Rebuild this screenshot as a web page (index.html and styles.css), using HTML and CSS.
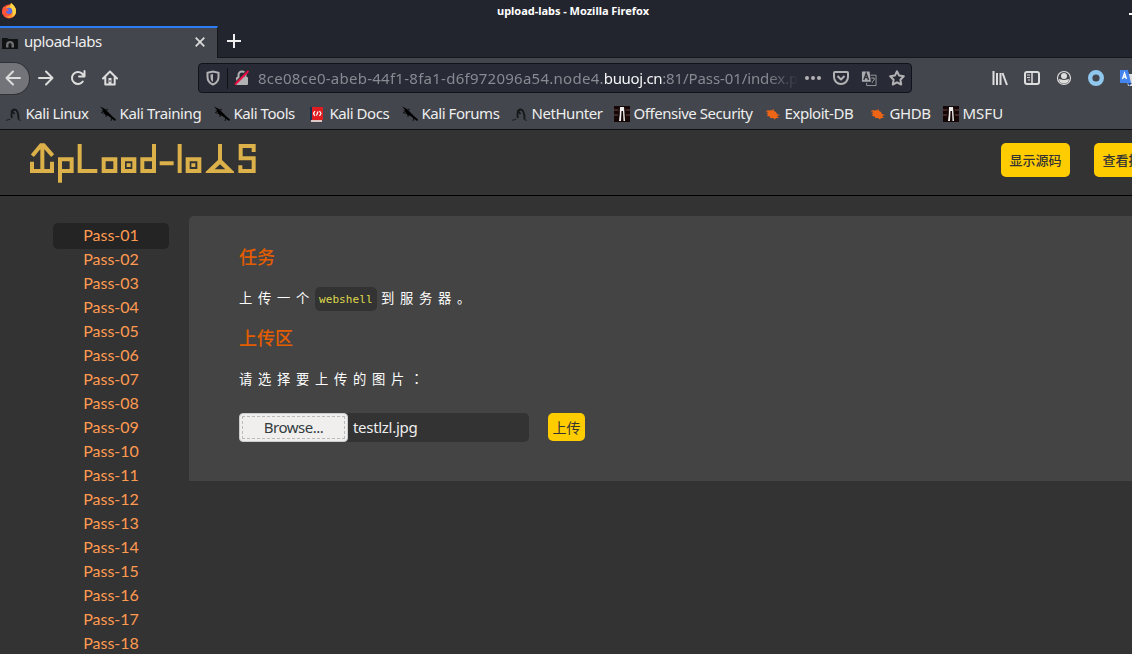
FILE: index.html
```html
<!DOCTYPE html>
<html lang="zh-CN">
<head>
<meta charset="utf-8">
<title>upload-labs</title>
<link rel="stylesheet" href="styles.css">
</head>
<body>
<svg class="defs" width="0" height="0">
  <defs>
    <symbol id="lizard" viewBox="0 0 16 16"><path d="M0 .5 5 3 7.500 5.500 10 8 13 11 16 13.500 15 15 11 12 8.500 10 5.500 9 4 6.500 1 4.500 3.500 4.500z" fill="#000"/><path d="M1 6.500l4 1M6 8v3M12 11l-1 4M6 3l2 1" stroke="#000" stroke-width=".8"/></symbol>
    <symbol id="dragon" viewBox="0 0 16 16"><path d="M6 12C4.500 8 6 3.500 8.500 3.500 11.500 3.500 12.500 7 12.500 13.500M8.500 8 6 5l3-2" fill="none" stroke="#151719" stroke-width="1.800"/><path d="M0 14.500 4.500 13M12 13.500l3 1" stroke="#24272c" stroke-width="1.200"/></symbol>
    <symbol id="offsec" viewBox="0 0 16 16"><path d="M0 0h16v16H0z" fill="#160707"/><path d="M0 4h4.500M11.500 4H16M0 9h4M12 9h4" stroke="#4e3030" stroke-width="1.500"/><path d="M6 1h4l.5 7 .5 7H9.500L9 5H7.500L7 15H5l.8-7z" fill="#eee"/></symbol>
    <symbol id="bug" viewBox="0 0 16 16"><path d="M2 4 5 4.500 7 4 11 6 12 8 15 9 12 10 14 12 11 12 10 13.500 8 12 5 12 5 10.500 2 10 3 8 1 7 3.500 6.500z" fill="#ee6516"/><path d="m1 5 5 2M8 3l1 3" stroke="#ee6516" stroke-width=".8"/></symbol>
  </defs>
</svg>
<div class="titlebar">
  <svg class="fox" viewBox="0 0 16 16"><circle cx="8" cy="8.500" r="7" fill="#f5443a"/><path d="M2 4 4.500 5C6 2 9 3 10 0c3 2 5 5 5 8a6.500 6.500 0 0 1-11 5z" fill="#ff982f"/><path d="M10 0c3 2 5 5 5 8 0 3-2 5-4 6 2-4 1-7-2-9z" fill="#ffd544"/><circle cx="8" cy="8" r="3.200" fill="#5869e8"/><path d="M2 4c3 0 4 2 6 3-1 1-2 1-3 1 0 3 3 4 6 2-2 5-8 4-10 0z" fill="#ff5639"/></svg>
  <span class="window-title">upload-labs - Mozilla Firefox</span>
  <i class="minimize"></i>
</div>
<div class="tabs">
  <div class="tab">
    <svg class="tab-icon" viewBox="0 0 16 16"><path d="M0 3h5l2 1h9v10H0z" fill="#101214"/><path d="M4 12.500V10a4 4 0 0 1 8 0v2.500H9.500V10h-3v2.500z" fill="#6d7073"/><path d="m8 7.500 2 2.500H6z" fill="#17191b"/></svg>
    <span class="tab-text">upload-labs</span>
    <svg class="close" viewBox="0 0 10 10"><path d="m.7.700 8.600 8.600m0-8.600L.7 9.300" stroke="#ddd" stroke-width="1.700"/></svg>
  </div>
  <div class="new-tab"><svg width="14" height="14" viewBox="0 0 14 14"><path d="M7 0v14M0 7h14" stroke="#eee" stroke-width="2"/></svg></div>
</div>
<div class="toolbar">
  <div class="nav">
    <span class="back"><svg width="16" height="16" viewBox="0 0 16 16"><path d="M15 8H1.500M8 1.500 1.500 8 8 14.500" class="line"/></svg></span>
    <svg width="16" height="16" viewBox="0 0 16 16"><path d="M1 8h13.500M8 1.500 14.500 8 8 14.500" class="line"/></svg>
    <svg width="16" height="16" viewBox="0 0 16 16"><path d="M12.800 11.500A6 6 0 1 1 12 3.500l2 2M14.500 1v5.500H9" class="line"/></svg>
    <svg width="16" height="16" viewBox="0 0 16 16"><path d="M1 8.500 8 1.500l7 7M3.300 7.500v7h9.400v-7" class="line"/><path d="M6.500 8h3v6h-3z" fill="#ddd"/><path d="M8 10v2" stroke="#444"/></svg>
  </div>
  <div class="urlbar">
    <svg class="shield" viewBox="0 0 14 16"><path d="M1.500 2.800 7 1.500l5.500 1.300V7c0 4-2 6-5.500 7.500C3.500 13 1.500 11 1.500 7z" fill="none" stroke="#b2b2b5" stroke-width="2"/><path d="M7 4v8C5 11 4.500 9 4.500 7V4.500z" fill="#b2b2b5"/></svg>
    <i class="separator"></i>
    <svg class="lock" viewBox="0 0 16 16"><path d="M4.500 8V5a3.500 3.500 0 0 1 7 0v3" fill="none" stroke="#b2b2b5" stroke-width="2"/><rect x="2" y="7" width="12" height="8" rx="1" fill="#b2b2b5"/><path d="M1.500 13 13 1" stroke="#282a35" stroke-width="2"/><path d="M1 14.500 14.500 1" stroke="#ef0e43" stroke-width="2"/></svg>
    <span class="url">8ce08ce0-abeb-44f1-8fa1-d6f972096a54.node4.<b>buuoj.cn</b><span class="path">:81/Pass-01/index.p</span></span>
    <div class="url-icons">
      <svg width="16" height="16" viewBox="0 0 16 16"><g fill="#b2b2b5"><circle cx="2" cy="8" r="2"/><circle cx="8" cy="8" r="2"/><circle cx="14" cy="8" r="2"/></g></svg>
      <svg width="16" height="16" viewBox="0 0 16 16"><path d="M2 2h12q1 0 1 1v4a7 7 0 0 1-14 0V3q0-1 1-1z" class="dim"/><path d="m4.500 6 3.500 3.500L11.500 6" class="dim"/></svg>
      <svg width="16" height="17" viewBox="0 0 17 17"><path d="M1 1h8l1.500 11H1z" fill="#aaacb0"/><path d="M10 5h6v11H6v-3" fill="none" stroke="#9b9ca2"/><path d="m3 10 2.500-7L8 10M4 7.500h3" fill="none" stroke="#31333b" stroke-width="1.500"/><path d="M11 8h3v2l-2 2v1" fill="none" stroke="#aaa"/></svg>
      <svg width="16" height="16" viewBox="0 0 16 16"><path d="m8 1.300 2.100 4.300 4.700.7-3.400 3.400.8 4.800L8 12.300l-4.200 2.200.8-4.800L1.200 6.300l4.700-.7z" class="dim"/></svg>
    </div>
  </div>
  <div class="tools">
    <svg width="16" height="16" viewBox="0 0 16 16"><path d="M1.500 1v14M5 3v12M8.500 3v12M10.500 3l4.500 12" stroke="#ddd" stroke-width="2"/></svg>
    <svg width="16" height="16" viewBox="0 0 16 16"><rect x="1" y="2" width="14" height="12" rx="2" class="line"/><path d="M8 2v12" stroke="#ddd" stroke-width="1.500"/><path d="M3 5h3M3 7.500h3M4 10h2" stroke="#ddd"/></svg>
    <svg width="16" height="16" viewBox="0 0 16 16"><circle cx="8" cy="8" r="6.500" fill="none" stroke="#ddd" stroke-width="1.200"/><circle cx="8" cy="6" r="3" fill="#ddd"/><path d="M3 9c2 0 2.500 1 5 1s3-1 5-1c0 6-10 6-10 0z" fill="#ddd"/></svg>
    <svg width="16" height="16" viewBox="0 0 16 16"><circle cx="8" cy="8" r="5.800" fill="none" stroke="#8fc7ee" stroke-width="4.400"/></svg>
    <svg width="16" height="16" viewBox="0 0 16 16"><path d="M6 4h10v12H8z" fill="#ddd"/><path d="M0 0h8l3 13H0z" fill="#4384ed"/><path d="m2.500 9 2-6 2 6M3 7h3" fill="none" stroke="#fff" stroke-width="1.300"/><path d="M8 13h4l-3 3z" fill="#174a9a"/></svg>
  </div>
</div>
<div class="bookmarks">
  <span><svg><use href="#dragon"/></svg>Kali Linux</span>
  <span><svg><use href="#lizard"/></svg>Kali Training</span>
  <span><svg><use href="#lizard"/></svg>Kali Tools</span>
  <span><svg viewBox="0 0 16 16"><path d="M1 1h12v13H1z" fill="#df1d20"/><path d="M0 1h2v13H0z" fill="#153452"/><path d="M1 14h11v2H1z" fill="#e0c6c5"/><path d="M5 5 3.500 7.500 5 10m4.500-5L11 7.500 9.500 10M8 5.500l-1.500 4" fill="none" stroke="#fff" stroke-width="1.200"/></svg>Kali Docs</span>
  <span><svg><use href="#lizard"/></svg>Kali Forums</span>
  <span><svg><use href="#dragon"/></svg>NetHunter</span>
  <span><svg><use href="#offsec"/></svg>Offensive Security</span>
  <span><svg><use href="#bug"/></svg>Exploit-DB</span>
  <span><svg><use href="#bug"/></svg>GHDB</span>
  <span><svg><use href="#offsec"/></svg>MSFU</span>
</div>
<header class="site-header">
  <svg class="logo" viewBox="30 36 681 126" role="img" aria-label="upload-labs">
    <g fill="none" stroke="#dcb149" stroke-width="12">
      <path d="M36 95v28h60V95M67 124V46M37 77 63 46h8l27 31"/>
      <path d="M120 158V88h35v35h-30M179 42v81h53M251 88h35v35h-35zM309 88h34v35h-34zM402 42v81h-35V88h35M419 100h42M479 42v87M503 88h35v35h-35z"/>
      <path d="M600 42v54M701 66V48h-39v37h39v38h-40v-17"/>
    </g>
    <path d="M320 100h12v11h-12zM514 100h12v11h-12z" fill="#dcb149"/>
    <path d="M594 90h12l36 35v4h-85v-4zM600 103l-16 15h32z" fill="#dcb149" fill-rule="evenodd"/>
  </svg>
  <div class="header-actions"><a>显示源码</a><a>查看提示</a></div>
</header>
<main class="page">
  <nav class="menu">
    <a class="active">Pass-01</a><a>Pass-02</a><a>Pass-03</a><a>Pass-04</a><a>Pass-05</a><a>Pass-06</a><a>Pass-07</a><a>Pass-08</a><a>Pass-09</a><a>Pass-10</a><a>Pass-11</a><a>Pass-12</a><a>Pass-13</a><a>Pass-14</a><a>Pass-15</a><a>Pass-16</a><a>Pass-17</a><a>Pass-18</a>
  </nav>
  <section class="panel">
    <h3>任务</h3>
    <p>上传一个<code>webshell</code>到服务器。</p>
    <h3>上传区</h3>
    <p>请选择要上传的图片<span class="colon">：</span></p>
    <div class="upload">
      <div class="file"><span class="browse"><span>Browse...</span></span><span class="filename">testlzl.jpg</span></div>
      <span class="submit">上传</span>
    </div>
  </section>
</main>
</body>
</html>
```
FILE: styles.css
```css
* { box-sizing: border-box; }
html, body { height: 100%; margin: 0; overflow: hidden; }
body { width: 1132px; height: 654px; display: flex; flex-direction: column; background: #333; color: #eee; font-family: "Noto Sans", "Noto Sans CJK SC", sans-serif; font-size: 15px; }
body > * { flex-shrink: 0; }
svg { flex: none; display: block; }
.defs { position: absolute; }
.line { fill: none; stroke: #ddd; stroke-width: 2; stroke-linecap: round; stroke-linejoin: round; }
.dim { fill: none; stroke: #b2b2b5; stroke-width: 2; stroke-linejoin: round; }

.titlebar { height: 26px; background: #23252e; display: grid; grid-template-columns: 497px 1fr 3px; align-items: center; overflow: hidden; }
.fox { width: 16px; height: 16px; margin: 0 0 4px 1px; }
.window-title { font-size: 11px; font-weight: 700; color: #fff; line-height: 16px; margin-bottom: 4px; white-space: nowrap; letter-spacing: -.02px; }
.minimize { height: 2px; background: #fff; margin-top: 2px; }

.tabs { height: 32px; display: flex; background: #23252e; border-bottom: 1px solid #16181e; }
.tab { width: 218px; height: 32px; border-top: 2px solid #2b7cf5; border-right: 1px solid #14161b; background: #43464c; display: flex; align-items: center; padding: 0 12px 2px 2px; }
.tab-icon { width: 16px; height: 16px; margin-top: 2px; }
.tab-text { margin-left: 6px; flex: 1; font-size: 15px; line-height: 20px; padding-bottom: 2px; letter-spacing: -.45px; }
.close { width: 10px; height: 10px; }
.new-tab { display: flex; align-items: center; margin-left: 9px; padding-bottom: 1px; }

.toolbar { height: 41px; background: #43464c; display: flex; align-items: center; padding-bottom: 1px; }
.nav { width: 198px; flex: none; display: flex; align-items: center; gap: 16px; }
.back { width: 30px; height: 33px; margin-right: -8px; border: 1px solid #303238; border-left: 0; border-radius: 0 16px 16px 0; background: #737479; display: flex; align-items: center; padding-left: 5px; }
.urlbar { width: 714px; height: 30px; flex: none; border: 1px solid #11131a; border-radius: 4px; background: #282a35; display: flex; align-items: center; padding-left: 7px; }
.shield { width: 14px; height: 16px; }
.separator { width: 1px; height: 21px; margin: 0 6px 0 7px; background: #101218; }
.lock { width: 16px; height: 16px; }
.url { width: 541px; flex: none; margin-left: 8px; padding-bottom: 1px; overflow: hidden; white-space: nowrap; color: #888a91; font-size: 15px; letter-spacing: .26px; -webkit-mask-image: linear-gradient(90deg, #000 94%, transparent); mask-image: linear-gradient(90deg, #000 94%, transparent); }
.url b { font-weight: 400; color: #f5f5f6; letter-spacing: -.35px; }
.path { letter-spacing: -.1px; }
.url-icons { display: flex; align-items: center; gap: 12px; margin-left: 6px; }
.tools { flex: none; display: flex; gap: 16px; margin-left: 80px; }

.bookmarks { height: 31px; background: #43464c; border-bottom: 1px solid #0d0e10; display: grid; grid-template-columns: 94px 114px 96px 92px 110px 102px 151px 105px 73px auto; padding: 0 0 2px 6px; align-items: center; }
.bookmarks span { display: flex; align-items: center; gap: 3.500px; white-space: nowrap; font-size: 15px; line-height: 20px; letter-spacing: -.45px; }
.bookmarks span:nth-child(2) { letter-spacing: -.38px; }
.bookmarks span:nth-child(10) { letter-spacing: 0; }
.bookmarks svg { width: 16px; height: 16px; margin-top: 2px; }

.site-header { height: 66px; border-bottom: 1px solid #000; display: flex; justify-content: space-between; padding: 12px 0 0 30px; }
.logo { width: 227px; height: 42px; }
.header-actions { display: flex; gap: 24px; margin: 1px -31px 0 0; }
.header-actions a { width: 69px; height: 34px; border-radius: 5px; background: #fc0; color: #333; font: 500 13px/34px "Noto Sans CJK SC", sans-serif; text-align: center; white-space: nowrap; }

.page { height: 458px; display: flex; overflow: hidden; background: #333; }
.menu { width: 116px; margin: 27px 20px 0 53px; flex: none; }
.menu a { display: block; height: 24px; border-radius: 5px; color: #ff9a51; font: 16px/24px Lato, sans-serif; text-align: center; }
.menu .active { height: 26px; margin-bottom: -2px; background: #242424; }
.panel { flex: 1; height: 265px; margin-top: 20px; background: #444; border-radius: 5px 0 0 0; padding: 28px 0 0 50px; }
.panel h3 { margin: 0; color: #e35d00; font-size: 18px; line-height: 26px; font-weight: 500; }
.panel p { display: flex; align-items: center; height: 22px; margin: 17px 0 16px; color: #fff; font: 13.3px/22px "Noto Sans CJK SC", sans-serif; letter-spacing: 5.700px; }
.colon { font-family: "Noto Sans CJK TC", sans-serif; }
code { width: 62px; height: 24px; border-radius: 5px; margin: 1px 4px 0 0; background: #333; color: #dfd84c; font: 11px/25px "DejaVu Sans Mono", monospace; letter-spacing: .08px; padding-left: 4px; }
.upload { display: flex; margin-top: 23px; gap: 19px; }
.file { width: 290px; height: 29px; background: #333; border-radius: 5px; display: flex; align-items: center; }
.browse { width: 109px; height: 29px; background: #f0efee; border: 1px solid #ccc; border-radius: 4px; padding: 2px; color: #333b3e; }
.browse span { display: block; height: 23px; border: 1px dashed #bbb; line-height: 21px; text-align: center; letter-spacing: -.5px; }
.filename { margin-left: 5px; line-height: 29px; height: 29px; letter-spacing: -.3px; }
.submit { width: 37px; height: 28px; border-radius: 5px; background: #fc0; color: #333; font: 14px/29px "Noto Sans CJK SC", sans-serif; text-align: center; }
```
